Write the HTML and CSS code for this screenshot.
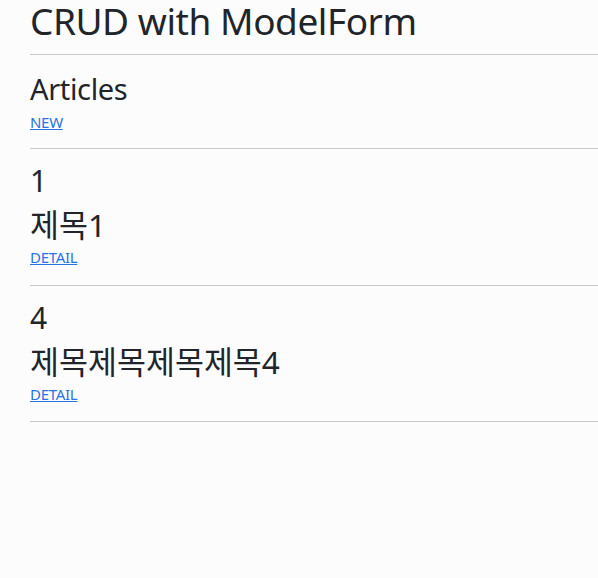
FILE: index.html
```html
<!DOCTYPE html>
<html lang="ko">
<head>
<meta charset="utf-8">
<title>CRUD with ModelForm</title>
<link rel="stylesheet" href="styles.css">
</head>
<body>
<div class="container">
  <header class="header">
    <h1 class="title">CRUD with ModelForm</h1>
  </header>
  <hr class="rule">
  <section class="intro">
    <h2 class="section">Articles</h2>
    <a class="link" href="#">NEW</a>
  </section>
  <hr class="rule">
  <div class="article">
    <h3 class="article-id">1</h3>
    <h3 class="article-title">제목1</h3>
    <a class="link" href="#">DETAIL</a>
  </div>
  <hr class="rule">
  <div class="article">
    <h3 class="article-id">4</h3>
    <h3 class="article-title">제목제목제목제목4</h3>
    <a class="link" href="#">DETAIL</a>
  </div>
  <hr class="rule">
</div>
</body>
</html>
```
FILE: styles.css
```css
html, body {
  margin: 0;
  background: #fdfcfd;
}
body {
  font-family: "Noto Sans", "Noto Sans CJK KR", sans-serif;
  color: #212529;
}
.container {
  padding-left: 30px;
  display: flex;
  flex-direction: column;
  align-items: stretch;
}
.header {
  height: 54px;
}
.title {
  margin: 0;
  font-size: 37px;
  font-weight: 400;
  line-height: 42px;
  letter-spacing: -0.45px;
  white-space: nowrap;
}
.rule {
  margin: 0;
  height: 0;
  border: 0;
  border-top: 1px solid #c9cacb;
}
.intro {
  display: flex;
  flex-direction: column;
  align-items: flex-start;
  padding: 17px 0 16px;
}
.section {
  margin: 0 0 6px;
  font-size: 29px;
  font-weight: 400;
  line-height: 34px;
  letter-spacing: -0.35px;
}
.link {
  color: #2a72e8;
  font-size: 15px;
  line-height: 20px;
  letter-spacing: -0.3px;
  text-decoration: underline;
}
.article {
  display: flex;
  flex-direction: column;
  align-items: flex-start;
  padding: 14px 0 17.5px;
}
.article-id {
  margin: 0 0 7px;
  font-size: 30px;
  font-weight: 400;
  line-height: 36px;
}
.article-title {
  margin: 0 0 4px;
  font-size: 31.5px;
  font-weight: 400;
  line-height: 37px;
  white-space: nowrap;
}
```
